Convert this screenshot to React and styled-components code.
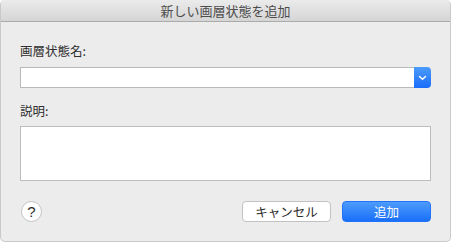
import React from 'react'
import styled, { createGlobalStyle } from 'styled-components'

const GlobalStyle = createGlobalStyle`
  html, body {
    margin: 0;
    padding: 0;
    background: #ffffff;
  }
  body {
    font-family: "Noto Sans CJK JP", "Noto Sans", sans-serif;
    -webkit-font-smoothing: antialiased;
  }
  * {
    box-sizing: border-box;
  }
`

const Window = styled.div`
  width: 451px;
  height: 242px;
  background: #ececec;
  border-radius: 5px;
  border: 1px solid #c9c9c9;
  border-top: none;
  overflow: hidden;
  display: flex;
  flex-direction: column;
`

const TitleBar = styled.div`
  height: 22px;
  flex-shrink: 0;
  background: linear-gradient(#ebebeb, #d5d5d5);
  border-bottom: 1px solid #ababab;
  display: flex;
  align-items: center;
  justify-content: center;
  color: #4c4c4c;
  font-size: 13px;
  line-height: 16px;
`

const Body = styled.form`
  flex: 1;
  display: flex;
  flex-direction: column;
  padding: 21px 19px 0 19px;
`

const Label = styled.label`
  font-size: 12.5px;
  line-height: 16px;
  color: #2e2e2e;
  margin-bottom: ${p => p.gap}px;
`

const Combo = styled.div`
  height: 21px;
  display: flex;
  margin-bottom: 15px;
`

const ComboField = styled.input`
  flex: 1;
  height: 21px;
  border: 1px solid #b9b9b9;
  border-right: none;
  background: #fff;
  outline: none;
  padding: 0 4px;
`

const ComboArrow = styled.div`
  width: 17px;
  height: 21px;
  border-radius: 0 4px 4px 0;
  background: linear-gradient(#4b9bfb, #1a6df9);
  display: flex;
  align-items: center;
  justify-content: center;
`

const Memo = styled.textarea`
  height: 55px;
  border: 1px solid #bdbdbd;
  background: #fff;
  resize: none;
  outline: none;
  margin: 0;
`

const Footer = styled.div`
  display: flex;
  align-items: center;
  margin-top: 20px;
  gap: 11px;
`

const Help = styled.button`
  width: 21px;
  height: 21px;
  border-radius: 50%;
  border: 1px solid #c3c3c3;
  background: #fff;
  color: #2e2e2e;
  font-family: "Liberation Sans", sans-serif;
  font-size: 15px;
  font-weight: 400;
  padding: 0;
  margin-right: auto;
  margin-left: 1px;
  display: flex;
  align-items: center;
  justify-content: center;
`

const Button = styled.button`
  width: 89px;
  height: 21px;
  border-radius: 4px;
  font-family: inherit;
  font-size: 12.5px;
  line-height: 16px;
  padding: 0;
  border: 1px solid ${p => (p.primary ? '#1f74f7' : '#c2c2c2')};
  background: ${p => (p.primary ? 'linear-gradient(#4d9cfb, #1a6ff9)' : '#fff')};
  color: ${p => (p.primary ? '#fff' : '#2b2b2b')};
`

const Chevron = () => (
  <svg width='9' height='6' viewBox='0 0 9 6'>
    <path d='M1.5 1.5 L4.5 4.3 L7.5 1.5' fill='none' stroke='#fff' strokeWidth='1.5' strokeLinecap='round' strokeLinejoin='round' />
  </svg>
)

const App = () => (
  <>
    <GlobalStyle />
    <Window>
      <TitleBar>新しい画層状態を追加</TitleBar>
      <Body onSubmit={e => e.preventDefault()}>
        <Label gap={8}>画層状態名:</Label>
        <Combo>
          <ComboField />
          <ComboArrow><Chevron /></ComboArrow>
        </Combo>
        <Label gap={7}>説明:</Label>
        <Memo />
        <Footer>
          <Help type='button'>?</Help>
          <Button type='button'>キャンセル</Button>
          <Button primary type='submit'>追加</Button>
        </Footer>
      </Body>
    </Window>
  </>
)

export default App
